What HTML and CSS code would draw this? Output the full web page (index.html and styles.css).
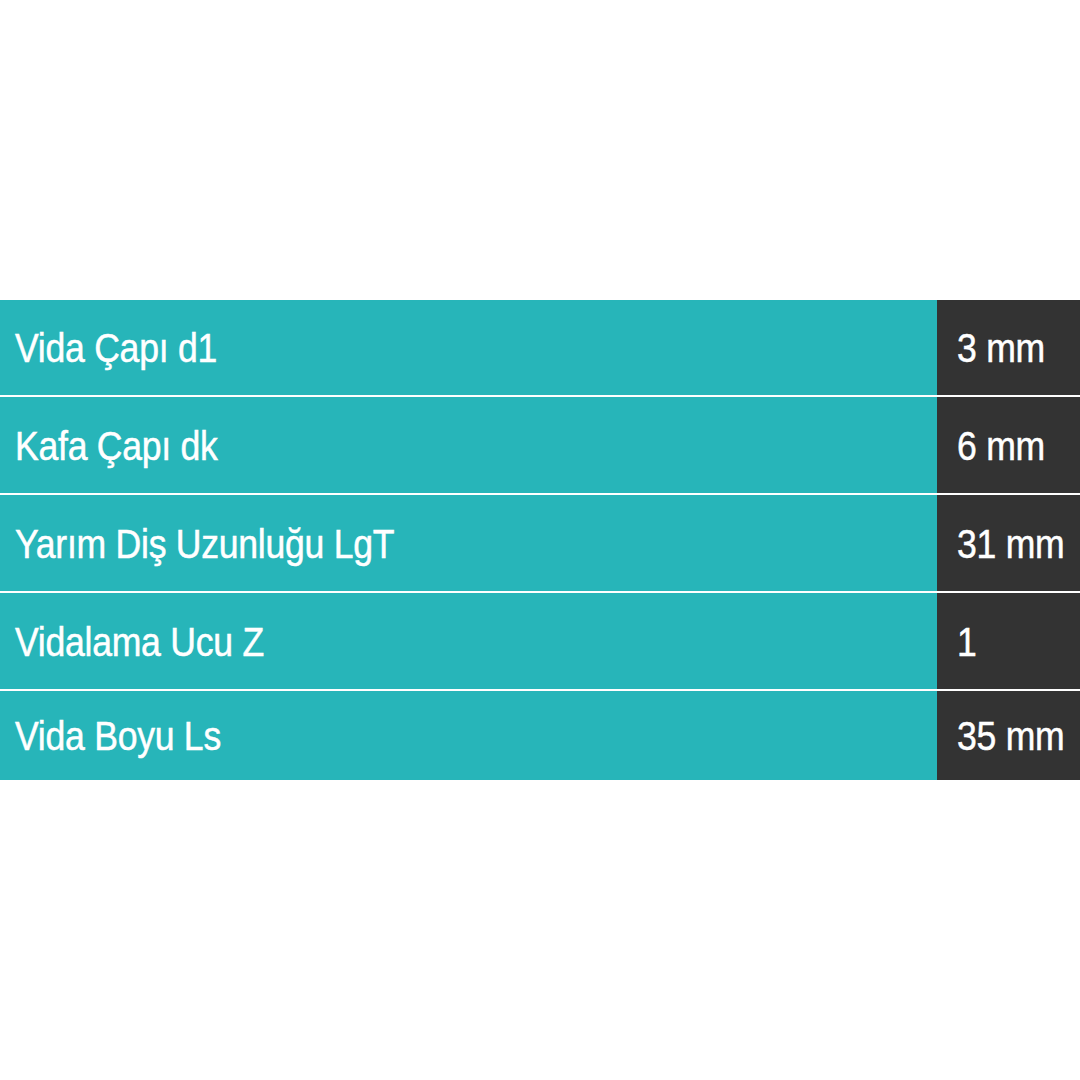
FILE: index.html
```html
<!DOCTYPE html>
<html lang="tr">
<head>
<meta charset="utf-8">
<title>Vida Özellikleri</title>
<link rel="stylesheet" href="styles.css">
</head>
<body>
<div class="specs">
  <div class="row first"><div class="label"><span class="txt">Vida Çapı d1</span></div><div class="value"><span class="txt">3 mm</span></div></div>
  <div class="row"><div class="label"><span class="txt">Kafa Çapı dk</span></div><div class="value"><span class="txt">6 mm</span></div></div>
  <div class="row"><div class="label"><span class="txt">Yarım Diş Uzunluğu LgT</span></div><div class="value"><span class="txt">31 mm</span></div></div>
  <div class="row"><div class="label"><span class="txt">Vidalama Ucu Z</span></div><div class="value"><span class="txt">1</span></div></div>
  <div class="row last"><div class="label"><span class="txt">Vida Boyu Ls</span></div><div class="value"><span class="txt">35 mm</span></div></div>
</div>
</body>
</html>
```
FILE: styles.css
```css
html, body {
  margin: 0;
  padding: 0;
  background: #ffffff;
}
body {
  width: 1080px;
  height: 1080px;
  display: flex;
  flex-direction: column;
  justify-content: center;
  overflow: hidden;
}
.specs {
  display: flex;
  flex-direction: column;
  font-family: "Liberation Sans", Arial, sans-serif;
  font-size: 40px;
  color: #ffffff;
}
.row {
  display: grid;
  grid-template-columns: 937px 1fr;
  height: 96px;
  border-top: 2px solid rgba(255, 255, 255, 0.85);
}
.row.first {
  height: 95px;
  border-top: none;
}
.row.last {
  height: 89px;
}
.label, .value {
  display: flex;
  align-items: center;
  white-space: nowrap;
  overflow: hidden;
}
.label {
  background: #27b5b9;
  padding-left: 15px;
}
.value {
  background: #333333;
  padding-left: 20px;
}
.txt {
  display: inline-block;
  transform: scaleX(0.89);
  transform-origin: left center;
  letter-spacing: -0.3px;
  -webkit-text-stroke: 0.5px #ffffff;
  padding-top: 2px;
}
```
